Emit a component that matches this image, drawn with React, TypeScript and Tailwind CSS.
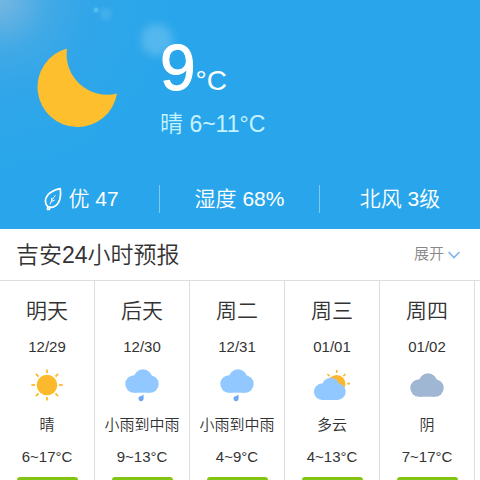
import { ReactNode } from 'react';

type Weather = 'sunny' | 'rain' | 'partly' | 'overcast';

interface Day {
  name: string;
  date: string;
  weather: Weather;
  text: string;
  temp: string;
}

const days: Day[] = [
  { name: '明天', date: '12/29', weather: 'sunny', text: '晴', temp: '6~17°C' },
  { name: '后天', date: '12/30', weather: 'rain', text: '小雨到中雨', temp: '9~13°C' },
  { name: '周二', date: '12/31', weather: 'rain', text: '小雨到中雨', temp: '4~9°C' },
  { name: '周三', date: '01/01', weather: 'partly', text: '多云', temp: '4~13°C' },
  { name: '周四', date: '01/02', weather: 'overcast', text: '阴', temp: '7~17°C' },
];

function Moon() {
  return (
    <svg viewBox="0 0 82 82" className="h-[82px] w-[82px]" aria-hidden="true">
      <path d="M31 2.5A40 40 0 1 0 81 47.5A40.5 40.5 0 0 1 31 2.5Z" fill="#fdbf2d" />
    </svg>
  );
}

function Leaf() {
  return (
    <svg
      viewBox="0 0 18 24"
      className="h-6 w-[18px]"
      fill="none"
      stroke="currentColor"
      strokeLinecap="round"
      strokeLinejoin="round"
      aria-hidden="true"
    >
      <path
        d="M4 19.8C.8 17.6 .6 12.4 3.4 8.6C6.2 5 11 2.6 16.2 1.6C17 7 16.6 12.4 14 16.2C11.8 19.4 8 20.6 5.4 20.2"
        strokeWidth="1.7"
      />
      <path d="M3.8 19.6L3.4 22.4H5.4L6 20" strokeWidth="1.6" />
      <path d="M6.2 17C7.4 13.8 9 11 11.2 8.6M7.6 13.8V11.2M7.8 14.4L10.4 13.2" strokeWidth="1" />
    </svg>
  );
}

function Cloud({ fill, transform }: { fill: string; transform?: string }) {
  return (
    <g fill={fill} transform={transform}>
      <circle cx="10" cy="17" r="8.7" />
      <circle cx="26" cy="17" r="8.7" />
      <circle cx="19" cy="11.4" r="9.2" />
      <rect x="10" y="12" width="16" height="13.7" />
    </g>
  );
}

const rays = [0, 45, 90, 135, 180, 225, 270, 315];

function WeatherIcon({ type }: { type: Weather }) {
  return (
    <svg viewBox="0 0 36 36" className="h-9 w-9" aria-hidden="true">
      {type === 'sunny' && (
        <g>
          <circle cx="18" cy="18" r="10.3" fill="#fdb92c" />
          {rays.map((angle) => (
            <path
              key={angle}
              d="M18 2.4V6"
              stroke="#fdb92c"
              strokeWidth="1.8"
              transform={`rotate(${angle} 18 18)`}
            />
          ))}
        </g>
      )}
      {type === 'rain' && (
        <g>
          <Cloud fill="#90c8ff" />
          <path d="M19.6 27.5V31A2.6 2.6 0 1 1 15.4 29.6C16.8 29 18.4 28.6 19.6 27.5Z" fill="#6ea8f5" />
        </g>
      )}
      {type === 'partly' && (
        <g>
          <circle cx="22.6" cy="16.8" r="8.9" fill="#fcb62d" />
          <path
            d="M22.7 3V6M31.4 7L29.4 9.2M13.4 7L15.6 9.2M33.2 16.6H36"
            stroke="#f0b92f"
            strokeWidth="1.6"
          />
          <Cloud fill="#90c8ff" transform="translate(-1.3 8.6) scale(.95)" />
        </g>
      )}
      {type === 'overcast' && <Cloud fill="#9fb7d3" transform="translate(0 4)" />}
    </svg>
  );
}

function Stat({ children }: { children: ReactNode }) {
  return (
    <li className="flex h-7 items-center justify-center gap-1.5 border-r border-white/40 first:pl-1 last:border-r-0">
      {children}
    </li>
  );
}

function DayColumn({ day }: { day: Day }) {
  return (
    <li className="flex w-[95px] shrink-0 flex-col items-center border-r border-[#dedede] pt-4 text-[15px] leading-5">
      <h3 className="text-[21px] leading-7">{day.name}</h3>
      <p className="mt-3">{day.date}</p>
      <div className="mt-2.5">
        <WeatherIcon type={day.weather} />
      </div>
      <p className="mt-3 whitespace-nowrap">{day.text}</p>
      <p className="mt-3">{day.temp}</p>
      <span className="mt-2.5 h-6 w-[61px] rounded-[3px] bg-[#84c513]" />
    </li>
  );
}

export default function App() {
  return (
    <main className="flex h-screen flex-col overflow-hidden bg-white font-['Liberation_Sans','Noto_Sans_CJK_SC',sans-serif] font-[350] text-[#333]">
      <header className="relative shrink-0 overflow-hidden bg-[#29a6eb] pb-4 text-white">
        {/* sun glare */}
        <div className="absolute inset-0 bg-[radial-gradient(circle_at_0_0,rgba(150,190,220,0.7),rgba(110,175,220,0.35)_50px,rgba(80,165,225,0.2)_90px,transparent_170px)]" />
        <div className="absolute top-6 left-[141px] h-8 w-8 rounded-full bg-white/20 blur-[4px]" />
        <div className="absolute top-2 left-[94px] h-1 w-1 rounded-full bg-[#6fd0fb] blur-[1px]" />
        <div className="absolute top-2 left-[100px] h-3 w-3 rounded-full bg-white/10 blur-[2px]" />

        <div className="relative flex items-start gap-[42px] pt-9 pl-9">
          <div className="pt-2.5">
            <Moon />
          </div>
          <div>
            <p className="flex items-baseline leading-none">
              <span className="text-[64px] [-webkit-text-stroke:1px_white]">9</span>
              <span className="text-[28px]">°C</span>
            </p>
            <p className="mt-2 text-[23px] leading-8 text-[#c5f2ff]">晴 6~11°C</p>
          </div>
        </div>
        <ul className="relative mt-[45px] grid grid-cols-3 text-[21px]">
          <Stat>
            <Leaf />
            <span>优 47</span>
          </Stat>
          <Stat>湿度 68%</Stat>
          <Stat>北风 3级</Stat>
        </ul>
      </header>

      <section>
        <div className="flex h-[52px] items-center justify-between border-b border-[#dedede] px-4">
          <h2 className="pt-0.5 text-[23px]">吉安24小时预报</h2>
          <button type="button" className="flex items-center gap-1 pr-1 text-[15px] text-[#888]">
            展开
            <svg viewBox="0 0 12 8" className="h-2 w-3" fill="none" stroke="#7fb3ec" strokeWidth="1.6" aria-hidden="true">
              <path d="M.6 1L6 6.6L11.4 1" />
            </svg>
          </button>
        </div>
        <ul className="flex overflow-hidden">
          {days.map((day) => (
            <DayColumn key={day.date} day={day} />
          ))}
        </ul>
      </section>
    </main>
  );
}
